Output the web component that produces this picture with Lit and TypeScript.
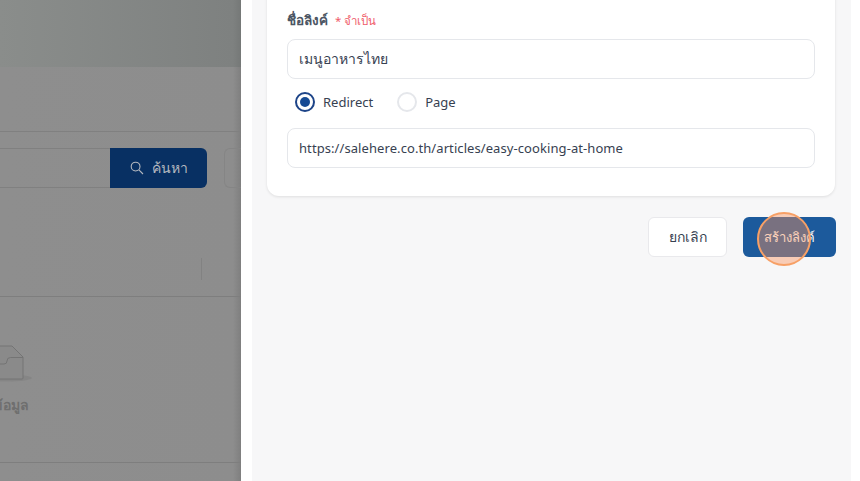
import { LitElement, html, css } from "lit";
import { customElement } from "lit/decorators.js";

@customElement("app-root")
export class AppRoot extends LitElement {
  static styles = css`
    :host {
      display: block;
      position: relative;
      width: 860px;
      height: 481px;
      overflow: hidden;
      font-family: "Noto Sans", "Noto Sans CJK SC", sans-serif;
      background: #fff;
    }
    * { box-sizing: border-box; }
    .layout { display: flex; height: 481px; }
    .page {
      width: 241px;
      flex: none;
      display: flex;
      flex-direction: column;
      background: linear-gradient(90deg, #8e8e8e 0, #8d8d8d 233px, #7f7f7f 241px);
      overflow: hidden;
    }
    .hero { height: 67px; flex: none; background: linear-gradient(90deg, #8a8d8b 0, #7e8180 233px, #757877 241px); }
    .bar { height: 65px; flex: none; border-bottom: 1px solid #808080; }
    .search { height: 40px; display: flex; margin-top: 16px; flex: none; }
    .field { width: 110px; flex: none; border: 1px solid #808080; border-left: 0; border-right: 0; }
    .sbtn {
      width: 97px;
      flex: none;
      background: #083063;
      color: #b4b8bf;
      border-radius: 0 6px 6px 0;
      display: flex;
      align-items: center;
      justify-content: center;
      gap: 8px;
      font-size: 14px;
      font-weight: 500;
    }
    .ghost { width: 20px; flex: none; margin-left: 17px; border: 1px solid #858585; border-right: 0; border-radius: 6px 0 0 6px; }
    .thead { flex: none; height: 109px; border-bottom: 1px solid #7e7e7e; display: flex; justify-content: flex-end; align-items: flex-end; padding-bottom: 16px; }
    .tick { width: 1px; height: 22px; background: #828282; margin-right: 39px; }
    .empty { height: 166px; flex: none; border-bottom: 1px solid #7e7e7e; position: relative; }
    .box { position: absolute; left: -26px; top: 48px; }
    .nodata { position: absolute; left: -32px; top: 97px; white-space: nowrap; font-size: 14px; font-weight: 600; color: #6f6f6f; }
    .edge { width: 11px; flex: none; background: #fff; }
    .drawer { width: 599px; flex: none; background: #f7f7f8; padding: 0 15px; display: flex; flex-direction: column; }
    .card {
      margin-top: -20px;
      margin-right: 1px;
      height: 216px;
      background: #fff;
      border-radius: 0 0 12px 12px;
      box-shadow: 0 1px 3px rgba(0,0,0,.1);
      padding: 31px 20px 0;
      display: flex;
      flex-direction: column;
    }
    .label { display: flex; align-items: baseline; gap: 7px; font-size: 13.5px; font-weight: 600; color: #4b5563; line-height: 18px; }
    .req { font-size: 11.5px; font-weight: 400; color: #ef5b6a; }
    .input {
      height: 40px;
      border: 1px solid #e5e7eb;
      border-radius: 8px;
      padding: 0 11px;
      display: flex;
      align-items: center;
      font-size: 13px;
      letter-spacing: .08px;
      color: #374151;
      background: #fff;
    }
    .thai { font-size: 14px; letter-spacing: 0; }
    .first { margin-top: 9px; }
    .radios { display: flex; align-items: center; height: 49px; padding: 0 0 3px 8px; font-size: 13px; color: #374151; }
    .radio { width: 20px; height: 20px; border-radius: 50%; border: 2px solid #e5e7eb; margin-right: 8px; flex: none; display: flex; align-items: center; justify-content: center; }
    .radio.on { border-color: #1d4488; }
    .radio.on::after { content: ""; width: 10px; height: 10px; border-radius: 50%; background: #164a93; }
    .gap { width: 24px; }
    .actions { display: flex; justify-content: flex-end; gap: 16px; margin-top: 21px; }
    .btn { height: 40px; border-radius: 6px; display: flex; align-items: center; justify-content: center; font-size: 14px; font-weight: 500; }
    .cancel { width: 79px; background: #fff; color: #374151; border: 1px solid #e9e9ec; }
    .create { width: 93px; background: #1c5a9c; color: #fff; font-size: 13px; }
    .tail { flex: 1; background: #fff; }
    .click {
      position: absolute;
      left: 757px;
      top: 212px;
      width: 54px;
      height: 54px;
      border-radius: 50%;
      border: 2px solid #f7a066;
      background: rgba(251, 146, 90, .42);
    }
  `;

  render() {
    return html`
      <div class="layout">
        <div class="page">
          <div class="hero"></div>
          <div class="bar"></div>
          <div class="search">
            <div class="field"></div>
            <div class="sbtn">
              <svg width="14" height="14" viewBox="0 0 14 14" fill="none" stroke="currentColor" stroke-width="1.1">
                <circle cx="5.6" cy="5.6" r="4.4"></circle>
                <path d="M8.9 8.9 13 13"></path>
              </svg>
              <span>ค้นหา</span>
            </div>
            <div class="ghost"></div>
          </div>
          <div class="thead"><div class="tick"></div></div>
          <div class="empty">
            <svg class="box" width="60" height="44" viewBox="0 0 60 44" fill="none">
              <ellipse cx="32" cy="33" rx="26" ry="3.5" fill="#858585"></ellipse>
              <path d="M12 1h26l11 11v21a1 1 0 0 1-1 1H8V12z" fill="#8a8a8a" stroke="#747474" stroke-width="1"></path>
              <path d="M8 19h22a3 3 0 0 0 3-3 3.5 3.5 0 0 1 3.5-3.5H49" stroke="#747474" stroke-width="1"></path>
            </svg>
            <div class="nodata">ไม่มีข้อมูล</div>
          </div>
        </div>
        <div class="edge"></div>
        <div class="drawer">
          <div class="card">
            <div class="label"><span>ชื่อลิงค์</span><span class="req">* จำเป็น</span></div>
            <div class="input first thai">เมนูอาหารไทย</div>
            <div class="radios">
              <span class="radio on"></span><span>Redirect</span>
              <span class="gap"></span>
              <span class="radio"></span><span>Page</span>
            </div>
            <div class="input">https://salehere.co.th/articles/easy-cooking-at-home</div>
          </div>
          <div class="actions">
            <div class="btn cancel">ยกเลิก</div>
            <div class="btn create">สร้างลิงค์</div>
          </div>
        </div>
        <div class="tail"></div>
      </div>
      <div class="click"></div>
    `;
  }
}
